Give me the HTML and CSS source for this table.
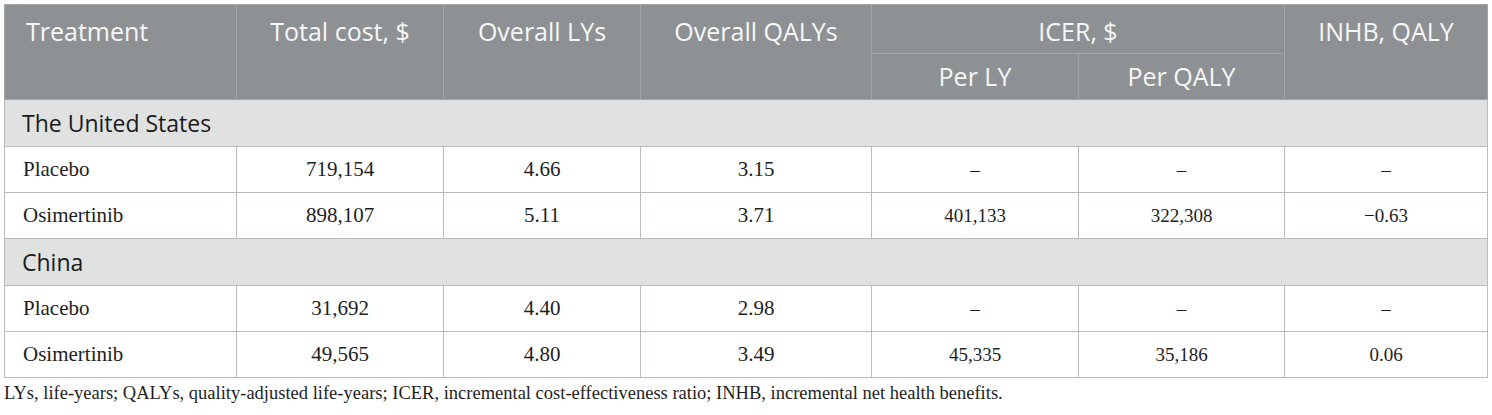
FILE: index.html
```html
<!DOCTYPE html>
<html>
<head>
<meta charset="utf-8">
<link rel="stylesheet" href="styles.css">
</head>
<body>
<div class="wrap">
<table class="tbl">
  <colgroup>
    <col class="c1"><col class="c2"><col class="c3"><col class="c4"><col class="c5"><col class="c6"><col class="c7">
  </colgroup>
  <thead>
    <tr class="h1">
      <th rowspan="2" class="left">Treatment</th>
      <th rowspan="2">Total cost, $</th>
      <th rowspan="2">Overall LYs</th>
      <th rowspan="2">Overall QALYs</th>
      <th colspan="2" class="mid">ICER, $</th>
      <th rowspan="2">INHB, QALY</th>
    </tr>
    <tr class="h2">
      <th class="sub">Per LY</th>
      <th class="sub">Per QALY</th>
    </tr>
  </thead>
  <tbody>
    <tr class="grp"><td colspan="7">The United States</td></tr>
    <tr class="row"><td class="name">Placebo</td><td>719,154</td><td>4.66</td><td>3.15</td><td class="tnr">–</td><td class="tnr">–</td><td class="tnr">–</td></tr>
    <tr class="row"><td class="name">Osimertinib</td><td>898,107</td><td>5.11</td><td>3.71</td><td class="tnr">401,133</td><td class="tnr">322,308</td><td class="tnr">−0.63</td></tr>
    <tr class="grp"><td colspan="7">China</td></tr>
    <tr class="row"><td class="name">Placebo</td><td>31,692</td><td>4.40</td><td>2.98</td><td class="tnr">–</td><td class="tnr">–</td><td class="tnr">–</td></tr>
    <tr class="row"><td class="name">Osimertinib</td><td>49,565</td><td>4.80</td><td>3.49</td><td class="tnr">45,335</td><td class="tnr">35,186</td><td class="tnr">0.06</td></tr>
  </tbody>
</table>
<p class="note">LYs, life-years; QALYs, quality-adjusted life-years; ICER, incremental cost-effectiveness ratio; INHB, incremental net health benefits.</p>
</div>
</body>
</html>
```

FILE: styles.css
```css
html, body {
  margin: 0;
  padding: 0;
  background: #ffffff;
}
.wrap {
  padding: 4px 0 0 4px;
}
.tbl {
  border-collapse: collapse;
  table-layout: fixed;
  width: 1483px;
  border: 1px solid #c9cbcb;
}
.c1 { width: 232px; }
.c2 { width: 207px; }
.c3 { width: 197px; }
.c4 { width: 231px; }
.c5 { width: 207px; }
.c6 { width: 206px; }
.c7 { width: 203px; }

.tbl th {
  background: #8d9193;
  color: #f6f7f7;
  font-family: "Open Sans", Lato, sans-serif;
  font-weight: 400;
  font-size: 25px;
  text-align: center;
  vertical-align: top;
  border: 1px solid #a3a6a8;
  padding: 11px 10px 0;
  line-height: 30px;
  white-space: nowrap;
}
.tbl thead tr.h1 { height: 49px; }
.tbl thead tr.h2 { height: 46px; }
.tbl th.left { text-align: left; padding-left: 21px; }
.tbl th.sub { padding-top: 7px; }

.tbl td {
  border: 1px solid #b9bcbc;
  font-family: "Liberation Serif", "Times New Roman", serif;
  font-size: 21px;
  color: #1e1e1e;
  text-align: center;
  vertical-align: middle;
  padding: 0 10px;
}
.tbl tr.row { height: 46px; }
.tbl td.name { text-align: left; padding-left: 18px; }
.tbl td.tnr { font-size: 19px; }

.tbl tr.grp { height: 47px; }
.tbl tr.grp td {
  background: #e0e2e1;
  font-family: "Open Sans", "Noto Sans", sans-serif;
  font-size: 23px;
  color: #1a1a1a;
  text-align: left;
  padding-left: 17px;
}

.note {
  margin: 5px 0 0 0;
  font-family: "Liberation Serif", "Times New Roman", serif;
  font-size: 18.5px;
  color: #1e1e1e;
}
```
